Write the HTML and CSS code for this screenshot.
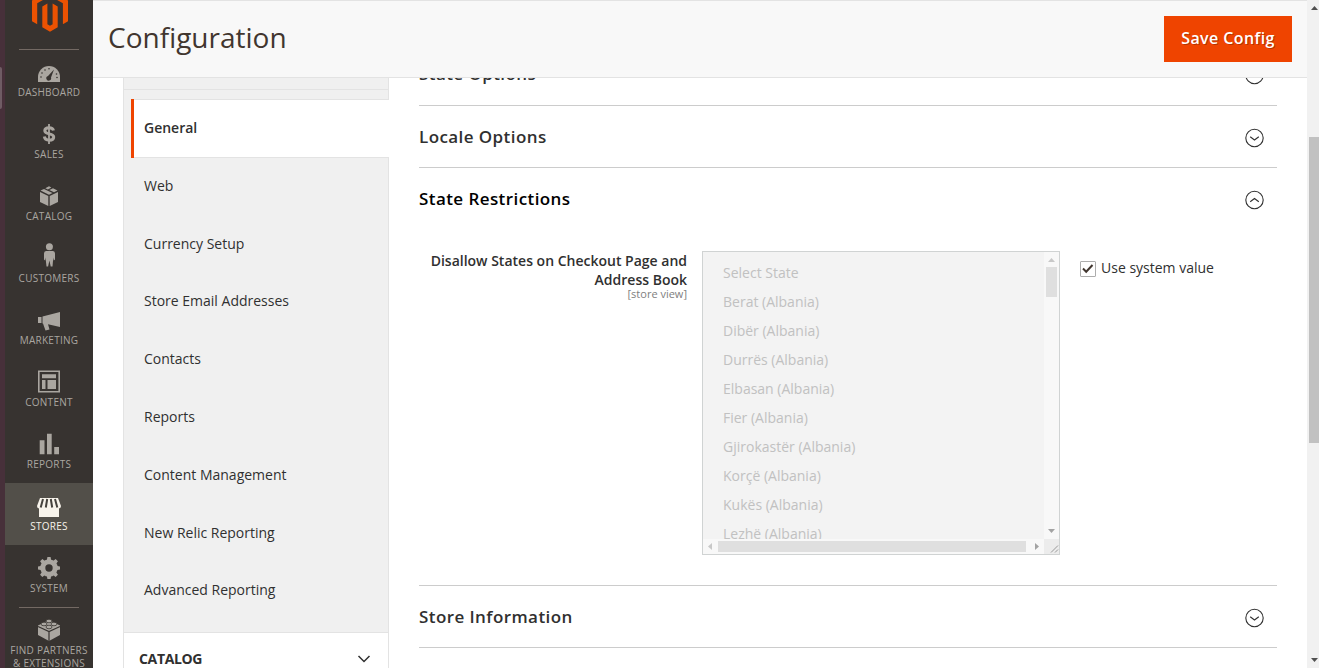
FILE: index.html
```
<!DOCTYPE html>
<html lang="en">
<head>
<meta charset="utf-8">
<title>Configuration</title>
<link rel="stylesheet" href="styles.css">
</head>
<body>
<div class="app">
  <div class="desktop-edge"><span class="edge-mark"></span></div>
  <nav class="menu">
    <div class="logo"><svg width="36" height="42" viewBox="0 0 36 42"><path fill="#eb5202" d="M18 0 36 10.4V31.2L30.900 34.200V13.300L18 5.900 5.200 13.300V34.200L0 31.200V10.400Z"/><path fill="#eb5202" d="M10.300 16.400 15.400 13.400V34.200L18 35.700 20.600 34.200V13.400L25.700 16.400V37.200L18 41.700 10.300 37.200Z"/></svg></div>
    <ul class="menu-list">
      <li class="menu-item"><svg width="24" height="24" viewBox="0 -2 24 24"><path fill="currentColor" d="M1 20V15a11 11 0 0 1 22 0v5Z"/><g fill="#373330"><circle cx="4" cy="15" r=".8"/><circle cx="5" cy="11" r=".8"/><circle cx="8" cy="8" r=".8"/><circle cx="12" cy="6.800" r=".8"/><circle cx="19.500" cy="12" r=".8"/><circle cx="20" cy="15.500" r=".8"/><path d="M17 7.500 14 15.500a2.400 2.400 0 1 1-3-1.600Z"/></g></svg><span>Dashboard</span></li>
      <li class="menu-item"><svg width="24" height="24" viewBox="0 0 24 24"><path fill="none" stroke="currentColor" stroke-width="3" d="M16.500 8.500C16 6.500 14.500 5.800 12 5.800c-2.600 0-4.200 1.200-4.200 3 0 4.400 8.900 1.800 8.900 6.200 0 2-1.700 3.200-4.400 3.200-2.800 0-4.600-1.200-5-3.600"/><path stroke="currentColor" stroke-width="1.800" d="M12 2v20"/></svg><span>Sales</span></li>
      <li class="menu-item"><svg width="24" height="24" viewBox="0 0 24 24"><path fill="currentColor" d="m3 8 8.300 4v10L3 18ZM21 8l-8.300 4v10L21 18ZM3.500 6.500 7 5l8.500 4-3.500 1.700ZM8.300 4.300 12 2.200l2.400 1.300L10.900 5.500ZM12.300 6 16 4.200 20.500 6.500 17 8.200Z"/></svg><span>Catalog</span></li>
      <li class="menu-item"><svg width="24" height="24" viewBox="0 2.5 24 24"><circle fill="currentColor" cx="12.400" cy="3.200" r="3.500"/><path fill="currentColor" d="M9 7.600h7q2 0 2 2.500V16l-1.200 1-.5-3-.8 9h-1.800l-1.300-6-1.300 6H9.500l-1-9-.4 3L7 16v-5.900q0-2.500 2-2.500Z"/></svg><span>Customers</span></li>
      <li class="menu-item"><svg width="24" height="24" viewBox="0 0 24 24"><path fill="currentColor" d="M1 9h3.500v6H1ZM5.500 8.600 23 4v15L11 16.200l1.500 5.300-4 1L6 15.500h-.5Z"/></svg><span>Marketing</span></li>
      <li class="menu-item"><svg width="24" height="24" viewBox="0 0 24 24"><path fill="none" stroke="currentColor" stroke-width="1.600" d="M1.800 1.300h20.400v20.400H1.800Z"/><path fill="currentColor" d="M5 4.200h14v4H5ZM5 10h3.500v9H5ZM10.500 10H19v9h-8.500Z"/></svg><span>Content</span></li>
      <li class="menu-item"><svg width="24" height="24" viewBox="0 0 24 24"><path fill="currentColor" d="M2.700 8.200h4.800v14H2.700ZM10 1.700h4.700v20.500H10ZM17.200 15h4.800v7.200h-4.800Z"/></svg><span>Reports</span></li>
      <li class="menu-item active"><svg width="24" height="24" viewBox="0 -1 24 24"><path fill="currentColor" d="M3 3h18l3 8q0 2.200-2 2.400V22H2v-8.600Q0 13.200 0 11Z"/><path stroke="#45423d" stroke-width="2" d="M6 4 3.700 12.500M10.200 4 8.800 12.500M13.800 4 15.200 12.500M18 4 20.300 12.500"/></svg><span>Stores</span></li>
      <li class="menu-item"><svg width="24" height="24" viewBox="0 0 24 24"><circle cx="12" cy="12" r="6.200" fill="none" stroke="currentColor" stroke-width="5"/><g fill="currentColor"><path id="tooth" d="m9.700 5 .7-4h3.200l.7 4ZM9.700 19l.7 4h3.200l.7-4ZM5 9.700l-4 .7v3.200l4 .7ZM19 9.700l4 .7v3.200l-4 .7Z"/><use href="#tooth" transform="rotate(45 12 12)"/></g></svg><span>System</span></li>
      <li class="menu-item partners"><svg width="24" height="24" viewBox="0 0 24 24"><path fill="currentColor" d="M1 7.500 12 2l11 5.500V17l-11 6L1 17Z"/><path fill="none" stroke="#373330" stroke-width="1.200" d="m1 8.500 11 5 11-5M12 13.500V23"/><g fill="currentColor" stroke="#373330" stroke-width=".8"><ellipse cx="12" cy="3" rx="3" ry="1.800"/><ellipse cx="7" cy="6" rx="3" ry="1.800"/><ellipse cx="17" cy="6" rx="3" ry="1.800"/><ellipse cx="12" cy="9" rx="3" ry="1.800"/></g></svg><span>Find Partners<br>&amp; Extensions</span></li>
    </ul>
  </nav>
  <main class="page">
    <header class="page-header"><h1>Configuration</h1><button class="save">Save Config</button></header>
    <div class="content">
      <aside class="tabs">
        <div class="tabs-head"></div>
        <ul class="tab-list">
          <li class="tab current">General</li><li class="tab">Web</li><li class="tab">Currency Setup</li><li class="tab">Store Email Addresses</li><li class="tab">Contacts</li><li class="tab">Reports</li><li class="tab">Content Management</li><li class="tab">New Relic Reporting</li><li class="tab">Advanced Reporting</li>
        </ul>
        <div class="tab-group"><span>Catalog</span><svg width="14" height="8" viewBox="0 0 14 8"><path d="m1.500 1 5.500 5.500L12.500 1" fill="none" stroke="#303030" stroke-width="1.500"/></svg></div>
      </aside>
      <div class="sections">
        <section class="section first"><h2>State Options</h2><svg class="toggle" viewBox="0 0 20 20"><circle cx="9.500" cy="10" r="8.700"/><path d="m5.200 8.700 4.300 3.300 4.300-3.300"/></svg></section>
        <section class="section"><h2>Locale Options</h2><svg class="toggle" viewBox="0 0 20 20"><circle cx="9.500" cy="10" r="8.700"/><path d="m5.200 8.700 4.300 3.300 4.300-3.300"/></svg></section>
        <section class="section open"><h2>State Restrictions</h2><svg class="toggle" viewBox="0 0 20 20"><circle cx="9.500" cy="10" r="8.700"/><path d="m5.200 11.800 4.300-3.300 4.300 3.300"/></svg></section>
        <div class="field">
          <div class="label">Disallow States on Checkout Page and Address Book<small>[store view]</small></div>
          <div class="multiselect">
            <ul class="options"><li>Select State</li><li>Berat (Albania)</li><li>Dibër (Albania)</li><li>Durrës (Albania)</li><li>Elbasan (Albania)</li><li>Fier (Albania)</li><li>Gjirokastër (Albania)</li><li>Korçë (Albania)</li><li>Kukës (Albania)</li><li>Lezhë (Albania)</li></ul>
            <div class="vbar"><svg width="15" height="15"><path fill="#c8c8c8" d="M4 10h7L7.500 6Z"/></svg><i class="vthumb"></i><svg class="end" width="15" height="15"><path fill="#a3a3a3" d="M4 5h7L7.500 9Z"/></svg></div>
            <div class="hbar"><svg width="15" height="15"><path fill="#c8c8c8" d="M9 4v7L5 7.500Z"/></svg><i class="hthumb"></i><svg class="end" width="15" height="15"><path fill="#a3a3a3" d="M6 4v7l4-3.500Z"/></svg></div>
            <svg class="grip" width="15" height="15"><path stroke="#999" d="m7 13.500 7-7M11 13.500l3-3"/></svg>
          </div>
          <div class="inherit"><span class="check"><svg width="14" height="14"><path d="m2 6.500 3.200 3.200L11.500 3" fill="none" stroke="#41362f" stroke-width="2"/></svg></span><span>Use system value</span></div>
        </div>
        <section class="section"><h2>Store Information</h2><svg class="toggle" viewBox="0 0 20 20"><circle cx="9.500" cy="10" r="8.700"/><path d="m5.200 8.700 4.300 3.300 4.300-3.300"/></svg></section>
      </div>
    </div>
  </main>
  <div class="scrollbar"><svg width="12" height="15"><path fill="#505050" d="M4 10h7L7.500 6Z"/></svg><i class="thumb"></i><svg class="end" width="12" height="15"><path fill="#505050" d="M4 5h7L7.500 9Z"/></svg></div>
</div>
</body>
</html>
```
FILE: styles.css
```
* { box-sizing: border-box; }
body { margin: 0; font: 14px/19px "Open Sans", "Noto Sans", sans-serif; color: #303030; background: #fff; overflow: hidden; }
ul { list-style: none; margin: 0; padding: 0; }
h1, h2 { margin: 0; }
svg { display: block; flex: none; }
.app { display: flex; height: 668px; width: 1319px; overflow: hidden; }
.desktop-edge { width: 5px; background: #47303a; padding-top: 67px; }
.edge-mark { display: block; width: 2px; height: 42px; background: #6f5c64; border-radius: 0 2px 2px 0; }
.menu { width: 88px; flex: none; background: #373330; color: #aaa6a0; overflow: hidden; }
.logo { height: 49px; display: flex; justify-content: center; align-items: flex-end; padding: 0 0 17px 1px; }
.menu-item { height: 62px; padding-top: 11px; display: flex; flex-direction: column; align-items: center; font-size: 10px; line-height: 13px; text-transform: uppercase; text-align: center; letter-spacing: .25px; white-space: nowrap; }
.menu-item svg { margin-bottom: 2px; overflow: visible; }
.menu-item.active { background: #524f49; color: #f7f3eb; }
.menu-item:first-child, .menu-item.partners { background: linear-gradient(#736963, #736963) 14px 0 / 60px 1px no-repeat; }
.menu-item.partners { height: 70px; }
.page { width: 1214px; flex: none; }
.page-header { height: 78px; background: #f8f8f8; border-top: 1px solid #e3e3e3; border-bottom: 1px solid #e3e3e3; display: flex; justify-content: space-between; align-items: center; padding: 0 15px; }
h1 { font-size: 28px; line-height: 38px; font-weight: 400; color: #41362f; padding-bottom: 5px; }
.save { width: 128px; height: 46px; border: 0; padding: 0 0 2px; background: #ef4400; color: #fff; font: 600 16px/24px "Open Sans", sans-serif; letter-spacing: .4px; text-shadow: 1px 1px 0 rgba(0,0,0,.25); }
.content { height: 590px; display: flex; gap: 30px; padding-left: 30px; overflow: hidden; }
.tabs { width: 266px; flex: none; border-left: 1px solid #e3e3e3; }
.tabs-head { height: 12px; background: #f0f0f0; border-bottom: 1px solid #e3e3e3; border-right: 1px solid #e3e3e3; }
.tab-list { height: 542px; background: linear-gradient(#e3e3e3, #e3e3e3) 100% 0 / 1px 100% no-repeat #f0f0f0; padding: 9px 0 0 7px; }
.tab { height: 57.780px; padding: 18px 13px 0; }
.tab.current { height: 59px; margin-bottom: -.1px; background: linear-gradient(#ef4400, #ef4400) 0 0 / 3px 100% no-repeat, linear-gradient(#e3e3e3, #e3e3e3) 0 0 / 100% 1px no-repeat, linear-gradient(#e3e3e3, #e3e3e3) 0 100% / 100% 1px no-repeat, #fff; font-weight: 600; padding-top: 19px; }
.tab-group { height: 60px; border: solid #e3e3e3; border-width: 1px 1px 0 0; padding: 16px 17px 0 15px; display: flex; justify-content: space-between; font-weight: 700; text-transform: uppercase; letter-spacing: -.35px; }
.tab-group svg { margin-top: 6px; }
.sections { width: 858px; margin-top: -34px; flex: none; }
.section { height: 62px; border-bottom: 1px solid #ccc; display: flex; justify-content: space-between; padding: 19px 12px 0 0; }
.section.first { padding-top: 18px; }
.section h2 { font-size: 17px; line-height: 23px; font-weight: 600; letter-spacing: .42px; }
.section.open { border: 0; }
.section.open h2 { color: #000; }
.toggle { width: 20px; height: 20px; margin-top: 3px; fill: none; stroke: #303030; stroke-width: 1.100; }
.field { height: 356px; padding-top: 21px; border-bottom: 1px solid #ccc; display: flex; align-items: flex-start; }
.label { width: 268px; margin-right: 15px; text-align: right; font-weight: 600; }
.label small { display: block; font-size: 11px; line-height: 10px; font-weight: 400; color: #808080; }
.multiselect { width: 358px; height: 304px; border: 1px solid #d0d3d3; display: grid; grid-template: 287px 15px / 341px 15px; background: #f3f3f3; }
.options { overflow: hidden; padding: 6px 20px; color: #c1c1c1; }
.options li { height: 29px; line-height: 29px; }
.vbar, .hbar, .scrollbar { display: flex; background: #f8f8f8; }
.vbar, .scrollbar { flex-direction: column; }
.end { margin-left: auto; }
.vbar .end, .scrollbar .end { margin: auto 0 0; }
.vthumb { width: 11px; height: 30px; margin-left: 2px; background: #dfdfdf; }
.hthumb { height: 11px; width: 308px; margin-top: 2px; background: #dfdfdf; }
.grip { background: #ececec; }
.inherit { display: flex; margin: 7px 0 0 20px; gap: 5px; }
.check { width: 16px; height: 16px; margin-top: 3px; border: 1px solid #adadad; border-radius: 1px; }
.scrollbar { width: 12px; flex: none; background: #f1f1f1; }
.thumb { width: 10px; height: 306px; margin: 122px 0 0 2px; background: #c1c1c1; }
```
